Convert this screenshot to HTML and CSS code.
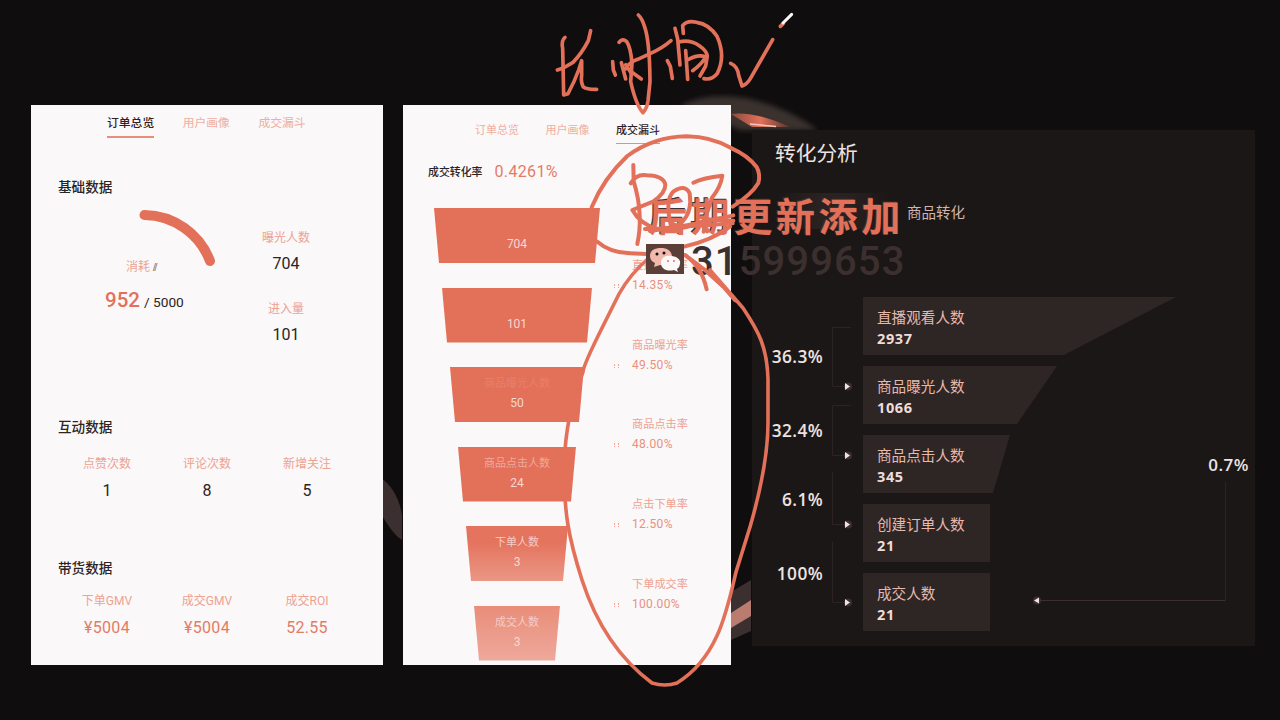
FILE: index.html
```html
<!DOCTYPE html>
<html lang="zh-CN">
<head>
<meta charset="utf-8">
<title>转化分析</title>
<link rel="stylesheet" href="styles.css">
</head>
<body>
<main class="stage">
  <svg class="glow" viewBox="0 0 1280 720" aria-hidden="true">
    <defs>
      <linearGradient id="flare"><stop offset="0" stop-color="#8b4b3f"/><stop offset=".5" stop-color="#e37059"/><stop offset="1" stop-color="#51352f"/></linearGradient>
      <filter id="soft"><feGaussianBlur stdDeviation="2.5"/></filter>
    </defs>
    <path d="M680 106Q705 92 745 98Q785 106 818 130L740 130Z" fill="#3b302f" filter="url(#soft)"/>
    <path d="M731 114Q755 111 790 127L752 127Z" fill="url(#flare)"/>
    <path d="M750 124L776 126.500" stroke="#f4c6bc" stroke-width="1.5"/>
    <path d="M380 477Q398 490 402 515V540Q393 535 380 512Z" fill="#3b302f"/>
    <path d="M731 592L751 580V631L731 640Z" fill="#3b302f"/>
    <path d="M731 613L751 600V616L731 628Z" fill="#b97c6f"/>
  </svg>

  <section class="card overview">
    <nav class="tabs"><span class="tab active">订单总览</span><span class="tab">用户画像</span><span class="tab">成交漏斗</span></nav>
    <h2 class="heading">基础数据</h2>
    <div class="basics">
      <div class="gauge">
        <svg class="arc" viewBox="0 0 150 80"><path d="M62.500 10A71 71 0 0 1 128 56" fill="none" stroke="#e37059" stroke-width="10" stroke-linecap="round"/></svg>
        <div class="gauge-text">
          <div class="label">消耗 <i class="hash">⫽</i></div>
          <div class="spend"><b>952</b><span>/ 5000</span></div>
        </div>
      </div>
      <div class="side">
        <div class="label">曝光人数</div><div class="num">704</div>
        <div class="label second">进入量</div><div class="num">101</div>
      </div>
    </div>
    <h2 class="heading">互动数据</h2>
    <div class="stats">
      <div><div class="label">点赞次数</div><div class="num">1</div></div>
      <div><div class="label">评论次数</div><div class="num">8</div></div>
      <div><div class="label">新增关注</div><div class="num">5</div></div>
    </div>
    <h2 class="heading goods">带货数据</h2>
    <div class="stats money">
      <div><div class="label">下单GMV</div><div class="num">¥5004</div></div>
      <div><div class="label">成交GMV</div><div class="num">¥5004</div></div>
      <div><div class="label">成交ROI</div><div class="num">52.55</div></div>
    </div>
  </section>

  <section class="card deal">
    <nav class="tabs"><span class="tab">订单总览</span><span class="tab">用户画像</span><span class="tab active">成交漏斗</span></nav>
    <div class="rate"><b>成交转化率</b><span>0.4261%</span></div>
    <div class="funnel-wrap">
      <div class="funnel">
        <div class="step s1"><span></span><b>704</b></div>
        <div class="step s2"><span></span><b>101</b></div>
        <div class="step s3"><span class="faint">商品曝光人数</span><b>50</b></div>
        <div class="step s4"><span>商品点击人数</span><b>24</b></div>
        <div class="step s5"><span>下单人数</span><b>3</b></div>
        <div class="step s6"><span>成交人数</span><b>3</b></div>
      </div>
      <div class="rates">
        <div><span>直播进入率</span><em>14.35%</em></div>
        <div><span>商品曝光率</span><em>49.50%</em></div>
        <div><span>商品点击率</span><em>48.00%</em></div>
        <div><span>点击下单率</span><em>12.50%</em></div>
        <div><span>下单成交率</span><em>100.00%</em></div>
      </div>
    </div>
  </section>

  <section class="analysis">
    <h1>转化分析</h1>
    <nav class="modes"><span class="mode-on"></span><span>商品转化</span></nav>
    <div class="chart">
      <div class="percents"><span>36.3%</span><span>32.4%</span><span>6.1%</span><span>100%</span></div>
      <svg class="links" viewBox="0 0 40 335">
        <g fill="none" stroke="#2c2423"><path d="M28 30.500H9.500V89.500H22M28 108.500H9.500V158.500H22M9.500 175V227.500H22M9.500 245V305.500H22"/></g>
        <g fill="#3b302f"><circle cx="25" cy="89.500" r="4"/><circle cx="25" cy="158.500" r="4"/><circle cx="25" cy="227.500" r="4"/><circle cx="25" cy="305.500" r="4"/></g>
        <g fill="#eee3e1"><path d="M22 86L27 89.500L22 93ZM22 155L27 158.500L22 162ZM22 224L27 227.500L22 231ZM22 302L27 305.500L22 309Z"/></g>
      </svg>
      <div class="bars">
        <div class="bar b1"><span>直播观看人数</span><b>2937</b></div>
        <div class="bar b2"><span>商品曝光人数</span><b>1066</b></div>
        <div class="bar b3"><span>商品点击人数</span><b>345</b></div>
        <div class="bar b4"><span>创建订单人数</span><b>21</b></div>
        <div class="bar b5"><span>成交人数</span><b>21</b></div>
      </div>
      <div class="total">
        <svg viewBox="0 0 226 350"><path d="M196.500 185V303.500" fill="none" stroke="#2c2423"/><path d="M196.500 303.500H10" fill="none" stroke="#3b302f"/><circle cx="8" cy="303.500" r="4" fill="#3b302f"/><path d="M10 300.500L5 303.500L10 306.500Z" fill="#eee3e1"/></svg>
        <b>0.7%</b>
      </div>
    </div>
  </section>

  <div class="watermark">
    <div class="wm-title">后期更新添加</div>
    <div class="wm-id"><span>315999653</span></div>
  </div>

  <svg class="ink" viewBox="0 0 1280 720" aria-hidden="true">
    <g id="title-ink" transform="translate(540 0) scale(.33333)">
      <path d="M75 112Q63 122 68 145L71 285L84 281Q104 244 116 210L125 182V225Q122 248 130 261Q143 269 170 268"/>
      <path d="M152 92L145 122Q125 161 99 187L70 204L52 210M218 185L220 210L226 225"/>
      <path d="M237 127Q247 113 260 125Q272 142 276 190L272 245Q288 316 309 338Q321 325 324 303L330 245Q329 120 313 78Q306 55 295 45"/>
      <path d="M244 188L257 237M256 207Q268 187 293 178L332 160Q365 146 393 122M276 217L304 237M257 194L273 218"/>
      <path d="M382 182L391 199L397 235M405 85L413 117L420 195M430 100L428 77Q441 60 470 67Q507 72 531 109Q558 169 532 220Q516 241 492 236"/>
      <path d="M437 152L443 238M416 126Q450 118 478 137Q500 152 502 168L497 198L480 228M442 180Q473 162 496 170Q491 187 458 212"/>
      <path d="M572 190Q593 199 596 226L606 258Q621 253 631 236L698 119"/>
      <path d="M721 79L730 70"/><path class="nib" d="M729 69L755 43"/>
    </g>
    <g transform="translate(560 120) scale(.33333)">
      <path d="M95 262Q130 176 202 108Q282 50 380 49Q455 50 515 85Q563 106 590 141Q602 163 595 189Q575 223 518 260"/>
      <path d="M112 365Q150 398 210 400L260 402M372 380Q455 362 510 320"/>
      <path d="M220 135L221 184Q237 235 239 286Q241 330 232 372M212 190Q230 161 260 166Q310 167 316 194Q317 219 279 245L217 270Q240 311 290 327Q370 335 440 298L520 302"/>
      <path d="M334 322Q313 240 341 214Q375 191 389 220Q397 272 369 303Q345 330 330 299M400 188Q430 173 487 167Q482 201 456 233L436 295L431 335"/>
      <path d="M255 327Q335 326 410 310T520 286M270 333L350 320L440 316L518 310"/>
      <path d="M375 405Q425 439 440 508M375 405L435 450L490 500L526 541"/>
    </g>
    <path class="oval" d="M650 257Q630 274 619 294L603 326Q583 366 583 372C568 408 565 440 564 465C564 512 568 536 582 580C595 620 617 657 652 683Q665 687 677 683C718 658 727 610 736 572L750 527Q768 465 768 422V379C767 347 759 332 743 308L710 270"/>
    <g transform="translate(646 244)">
      <rect width="38" height="30" fill="#5a3f39"/><path class="bubble back" d="M4 12C4 6 9 4 15 4S26 7 26 13S20 22 14 21L8 23L9 19Q4 17 4 12Z"/><circle cx="11" cy="10" r="1.500" fill="#0f0d0e"/><circle cx="18" cy="9" r="1.500" fill="#0f0d0e"/><path class="bubble front" d="M15 19C15 13 20 11 26 12S35 16 34 20Q34 23 31 25L32 28L28 26C21 28 15 25 15 19Z"/><circle cx="22" cy="17" r="1" fill="#e37059"/><circle cx="28" cy="17" r="1" fill="#e37059"/>
    </g>
  </svg>
</main>
</body>
</html>
```
FILE: styles.css
```css
* { box-sizing: border-box; }
body { margin: 0; background: #0f0d0e; font-family: Roboto, "Noto Sans CJK SC", sans-serif; }
h1, h2 { margin: 0; }
em, i { font-style: normal; }
.stage { position: relative; width: 1280px; height: 720px; overflow: hidden; display: flex; align-items: flex-start; padding: 105px 25px 0 31px; }
.glow, .ink { position: absolute; left: 0; top: 0; width: 1280px; height: 720px; pointer-events: none; }
.card { position: relative; height: 560px; background: #faf8f9; color: #2c2423; }
.overview { width: 352px; margin-right: 20px; padding: 10px 26px 0 26px; }
.deal { width: 328px; margin-right: 21px; padding: 18px 0 0 25px; }
.tabs { display: flex; line-height: 16px; font-size: 11.8px; color: #efaf9f; white-space: nowrap; }
.tab { padding-bottom: 5px; border-bottom: 2px solid transparent; }
.tab.active { color: #30211f; font-weight: 500; border-color: #e98e7a; }
.overview .tabs { gap: 28.500px; padding-left: 50px; }
.heading { margin-top: 39px; padding-left: 1px; font-size: 13.6px; line-height: 20px; font-weight: 500; }
.label { font-size: 12px; line-height: 18px; color: #eda292; white-space: nowrap; }
.num { font-size: 16px; line-height: 20px; margin-top: 8px; }
.basics { display: flex; height: 220px; }
.gauge { width: 179px; padding-left: 25px; }
.arc { display: block; width: 150px; height: 80px; margin-top: 8px; }
.gauge-text { margin-top: -27px; }
.gauge-text .label { padding-left: 44px; }
.hash { color: #4a2b26; font-size: 10px; }
.spend { display: flex; align-items: baseline; gap: 4px; margin: 10px 0 0 23px; font-size: 13.7px; line-height: 26px; white-space: nowrap; }
.spend b { font-size: 20.5px; font-weight: 500; color: #e37059; }
.side { width: 100px; padding-top: 32px; text-align: center; }
.side .label + .num { margin-top: 7px; }
.side .second { margin-top: 26px; }
.basics + .heading { margin-top: 0; }
.stats { display: grid; grid-template-columns: repeat(3, 100px); margin-top: 18px; text-align: center; }
.heading.goods { margin-top: 57px; }
.money { margin-top: 14px; }
.money .num { color: #e57b65; letter-spacing: .3px; margin-top: 8px; }
.deal .tabs { font-size: 11px; gap: 26.500px; padding-left: 47px; }
.deal .tab { padding-bottom: 4px; border-width: 1px; }
.rate { display: flex; align-items: center; gap: 12px; height: 20px; margin-top: 17px; font-size: 16px; letter-spacing: .35px; color: #e57b65; }
.rate b { font-size: 10.9px; letter-spacing: 0; font-weight: 500; color: #2c2423; }
.funnel-wrap { display: flex; margin-top: 27px; }
.funnel { width: 178px; display: flex; flex-direction: column; align-items: center; gap: 24.500px; }
.step { height: 55px; display: flex; flex-direction: column; align-items: center; padding-top: 8px; background: #e37059; color: #f6d8d2; font-size: 11px; line-height: 18px; white-space: nowrap; }
.step span { height: 19px; color: #edaa9c; }
.step .faint { color: #e6806b; }
.step b { font-size: 12px; font-weight: 400; }
.s1 { width: 166px; clip-path: polygon(0 0, 100% 0, 161px 100%, 5px 100%); }
.s2 { width: 150px; clip-path: polygon(0 0, 100% 0, 145px 100%, 5px 100%); }
.s3 { width: 134px; clip-path: polygon(0 0, 100% 0, 129px 100%, 5px 100%); }
.s4 { width: 118px; clip-path: polygon(0 0, 100% 0, 113px 100%, 5px 100%); }
.s5 { width: 102px; clip-path: polygon(0 0, 100% 0, 97px 100%, 5px 100%); background: linear-gradient(#e4745e 30%, #ea9786); }
.s6 { width: 86px; clip-path: polygon(0 0, 100% 0, 81px 100%, 5px 100%); background: linear-gradient(#e98d7a, #eea99b); }
.s5 span, .s6 span { color: #f5cdc5; }
.rates { padding: 49px 0 0 26px; display: flex; flex-direction: column; gap: 41.700px; }
.rates div { display: flex; flex-direction: column; font-size: 11.2px; line-height: 18px; color: #eda292; white-space: nowrap; }
.rates em { position: relative; font-size: 12px; line-height: 20px; color: #ea907e; letter-spacing: .3px; }
.rates em::before { content: ""; position: absolute; left: -18px; top: 9px; width: 3px; height: 4px; border-right: 1px dotted #eda292; border-left: 1px dotted #eda292; }
.analysis { position: relative; width: 503px; height: 516px; margin-top: 25px; background: #1b1716; color: #eee3e1; }
.analysis h1 { padding: 8px 0 0 23px; font: 400 20.7px/29px "Noto Sans CJK SC", sans-serif; }
.modes { display: flex; align-items: center; gap: 17px; height: 36px; margin: 26px 0 0 23px; font-size: 14.5px; color: #d2b5ae; }
.mode-on { width: 115px; height: 36px; background: linear-gradient(90deg, #1b1716, #2a2221 40%, #2a2221 60%, #1b1716); }
.chart { position: relative; display: flex; margin-top: 68px; font-family: "Open Sans", "Noto Sans CJK SC", sans-serif; }
.percents { width: 71px; padding-top: 48px; display: flex; flex-direction: column; text-align: right; gap: 50px; font-size: 17.3px; font-weight: 600; line-height: 24px; letter-spacing: .4px; }
.percents span:nth-child(3) { margin-top: -5px; }
.links { width: 40px; height: 335px; }
.bars { display: flex; flex-direction: column; gap: 11px; }
.bar { width: 313px; height: 58px; padding: 9px 0 0 14px; background: #2e2625; display: flex; flex-direction: column; white-space: nowrap; }
.bar span { font: 400 14.6px/22px "Noto Sans CJK SC", sans-serif; color: #e5b9af; }
.bar b { font-size: 14.5px; line-height: 22px; font-weight: 700; letter-spacing: .6px; color: #f0dcd8; }
.b1 { clip-path: polygon(0 0, 313px 0, 201px 100%, 0 100%); }
.b2 { clip-path: polygon(0 0, 194px 0, 154px 100%, 0 100%); }
.b3 { clip-path: polygon(0 0, 147px 0, 130px 100%, 0 100%); }
.b4, .b5 { width: 127px; }
.total { position: absolute; left: 277px; top: 0; width: 226px; height: 350px; }
.total b { position: absolute; right: 6px; top: 156px; font-size: 17px; line-height: 24px; font-weight: 600; letter-spacing: .5px; }
.ink { fill: none; }
.ink path { fill: none; stroke: #e37059; stroke-width: 12px; stroke-linecap: round; stroke-linejoin: round; }
.ink #title-ink path { stroke-width: 11px; }
.ink #title-ink .nib { stroke: #faf8f9; stroke-width: 9px; }
.ink .oval { stroke-width: 3.600px; }
.ink .bubble { stroke: none; }
.ink .back { fill: #f2b8ac; }
.ink .front { fill: #faf8f9; }
.watermark { position: absolute; left: 646px; top: 193px; white-space: nowrap; }
.wm-title { padding-left: 2px; font: 700 39px/42px "Noto Sans CJK SC", sans-serif; letter-spacing: 3.700px; color: #e37059; text-shadow: -1px -1px 0 #3b302f; }
.wm-id { padding: 6px 0 0 45px; }
.wm-id span { font: 500 40px/42px Roboto, sans-serif; letter-spacing: 1.100px; color: #3b302f; }
```
